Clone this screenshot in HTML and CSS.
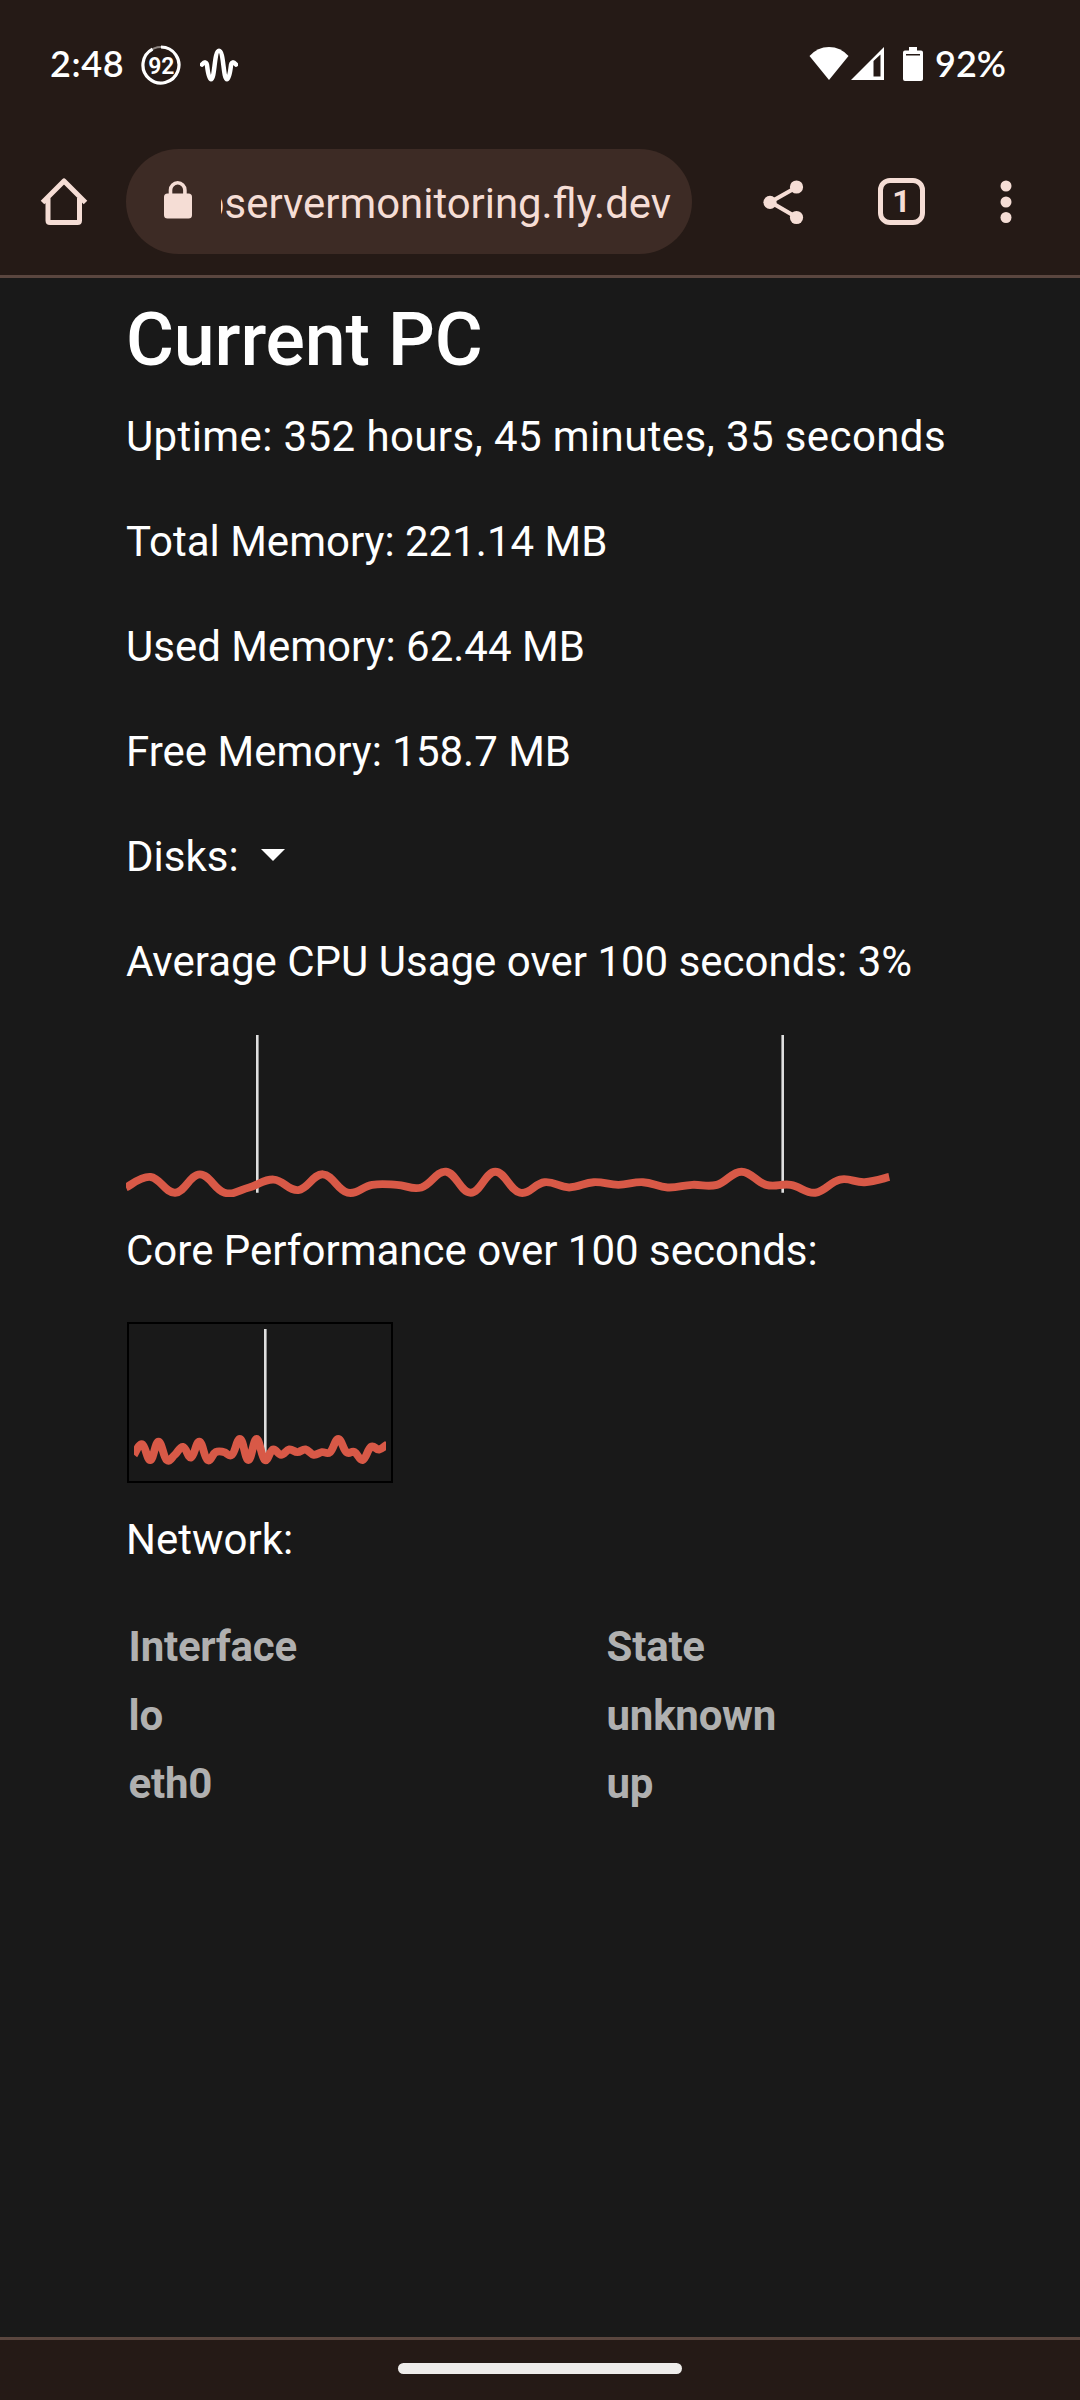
FILE: index.html
```
<!DOCTYPE html>
<html lang="en">
<head>
<meta charset="utf-8">
<title>Server Monitoring</title>
<link rel="stylesheet" href="styles.css">
</head>
<body>
<header class="browser">
  <div class="status">
    <span class="clock">2:48</span>
    <svg class="badge" width="40" height="40" viewBox="0 0 40 40"><circle cx="20" cy="20" r="18" class="ring-track"/><path d="M20 2A18 18 0 1 1 11.5 4.1" class="ring"/><text x="20.3" y="28.5" class="ring-text">92</text></svg>
    <svg class="wave" width="38" height="34" viewBox="0 0 38 34"><path d="M2 16.5Q6 12 7 17Q8.5 31.2 11 31.2C15 31.2 14 2.8 19 2.8S23 31.2 27 31.2Q29.5 31.2 31 17Q32 12 36 16.5"/></svg>
    <span class="spacer"></span>
    <svg class="wifi" width="40" height="33" viewBox="0 0 40 33"><path d="M.5 9Q8.500 0 20 0T39.500 9L20 33Z"/></svg>
    <svg class="signal" width="33" height="33" viewBox="0 0 33 33"><path fill-rule="evenodd" d="M0 33L33 0V33ZM22.500 14V29.500H29.500V7.500Z"/></svg>
    <svg class="battery" width="20" height="34" viewBox="0 0 20 34"><path fill-rule="evenodd" d="M6 0H14V3.500H18Q20 3.500 20 5.500V32Q20 34 18 34H2Q0 34 0 32V5.500Q0 3.500 2 3.500H6ZM3 7V8.500H17V7Z"/></svg>
    <span class="percent">92%</span>
  </div>
  <div class="toolbar">
    <svg class="home" width="48" height="48" viewBox="0 0 48 48"><path d="M2.500 24.500L24 3L45.500 24.500M8 20V42.500Q8 44.500 10 44.500H37.500Q39.500 44.500 39.500 42.500V20"/></svg>
    <div class="address">
      <svg class="lock" width="30" height="38" viewBox="0 0 30 38"><path d="M7.500 14V9a7.200 7.200 0 0 1 14.400 0V14" class="shackle"/><rect x="1" y="12.500" width="28" height="25" rx="3.500"/></svg>
      <div class="url"><span>pservermonitoring.fly.dev</span></div>
    </div>
    <svg class="share" width="42" height="46" viewBox="0 0 42 46"><path d="M34 8L7.500 23L34 38.500"/><circle cx="33.500" cy="8" r="6.600"/><circle cx="7" cy="23.300" r="6.600"/><circle cx="33.500" cy="38.500" r="6.600"/></svg>
    <div class="tabs">1</div>
    <svg class="more" width="12" height="44" viewBox="0 0 12 44"><circle cx="6" cy="6" r="5.500"/><circle cx="6" cy="22" r="5.500"/><circle cx="6" cy="37.500" r="5.500"/></svg>
  </div>
</header>
<main class="page">
  <h1>Current PC</h1>
  <p class="uptime">Uptime: 352 hours, 45 minutes, 35 seconds</p>
  <p>Total Memory: 221.14 MB</p>
  <p>Used Memory: 62.44 MB</p>
  <p>Free Memory: 158.7 MB</p>
  <p class="disks">Disks: <svg width="24" height="12" viewBox="0 0 24 12"><path d="M0 0H24L12 12Z"/></svg></p>
  <p>Average CPU Usage over 100 seconds: 3%</p>
  <svg class="chart cpu" width="788" height="162" viewBox="0 0 788 162"><path class="grid" d="M131.300 0V157.700M656.700 0V157.700"/><path class="line"/></svg>
  <p>Core Performance over 100 seconds:</p>
  <div class="core"><svg class="chart" width="252" height="147" viewBox="0 0 252 147"><path class="grid" d="M131.300 0V131"/><path class="line"/></svg></div>
  <p>Network:</p>
  <div class="table">
    <span>Interface</span><span>State</span>
    <span>lo</span><span>unknown</span>
    <span>eth0</span><span>up</span>
  </div>
</main>
<footer class="navbar"><div class="handle"></div></footer>
<script src="charts.js"></script>
</body>
</html>
```
FILE: styles.css
```
* { box-sizing: border-box; }
body {
  margin: 0;
  width: 1080px;
  height: 2400px;
  display: flex;
  flex-direction: column;
  background: #191919;
  color: #fff;
  font-family: Roboto, sans-serif;
  overflow: hidden;
}
svg { display: block; flex: none; }
.browser { height: 278px; flex: none; background: #251a16; border-bottom: 3px solid #5a463f; }
.status { height: 128px; padding: 0 75px 0 50px; display: flex; align-items: center; font-family: Lato, sans-serif; font-weight: 600; font-size: 36px; }
.clock { letter-spacing: .6px; width: 91px; margin-top: -2px; }
.badge { fill: none; margin-top: 1px; }
.ring { stroke: #fff; stroke-width: 3.2; }
.ring-track { stroke: #8d8581; stroke-width: 2; }
.ring-text { fill: #fff; font: 600 23px Roboto, sans-serif; text-anchor: middle; }
.wave { margin-left: 19px; margin-top: 2px; fill: none; stroke: #fff; stroke-width: 4.5; stroke-linecap: round; }
.spacer { flex: 1; }
.wifi, .signal, .battery { fill: #fff; margin-top: -1px; }
.signal { margin-left: 2px; }
.battery { margin-left: 19px; }
.percent { width: 70px; margin-left: 12px; margin-top: -2px; }
.toolbar { height: 147px; display: flex; align-items: center; padding-left: 40px; fill: #f5ddd5; }
.home { fill: none; stroke: #f5ddd5; stroke-width: 5; stroke-linejoin: round; }
.address { width: 566px; height: 105px; margin-left: 38px; border-radius: 53px; background: #3d2b25; display: flex; align-items: center; padding-left: 37px; }
.lock { margin-top: -3px; }
.shackle { fill: none; stroke: #f5ddd5; stroke-width: 3.6; }
.url { width: 450px; margin-left: 28px; padding-top: 3px; display: flex; justify-content: flex-end; overflow: hidden; color: #f5ddd5; font-size: 41.9px; white-space: nowrap; }
.share { margin-left: 71px; fill: #f5ddd5; }
.share path { fill: none; stroke: #f5ddd5; stroke-width: 4.2; }
.tabs { width: 47px; height: 47px; margin-left: 73px; border: 5px solid #f5ddd5; border-radius: 12px; color: #f5ddd5; font-weight: 700; font-size: 32px; line-height: 37px; text-align: center; }
.more { margin-left: 75px; }
.page { flex: 1; padding: 18px 126px 0; }
h1 { margin: 0; font-weight: 500; font-size: 73.5px; line-height: 88px; letter-spacing: -.15px; }
p { margin: 0; font-size: 42px; line-height: 105px; white-space: nowrap; }
.uptime { letter-spacing: .39px; }
.disks { display: flex; align-items: center; gap: 22px; }
.disks svg { fill: #fff; margin-top: -4px; }
.chart { fill: none; }
.cpu { margin: 21px 0 1px; }
.grid { stroke: #dedede; stroke-width: 2.6; }
.line { stroke: #d85947; stroke-width: 7.900; }
.core { width: 266px; height: 161px; margin: 19px 0 4px 1px; border: 2px solid #000; padding: 5px; }
.table { display: grid; grid-template-columns: 478px 300px; grid-auto-rows: 68.5px; margin: 21px 0 0 2.600px; color: #b0b0b0; font-size: 42px; font-weight: 700; line-height: 68.5px; letter-spacing: -.25px; }
.navbar { height: 63px; flex: none; background: #251a16; border-top: 3px solid #5a463f; padding-top: 23px; }
.handle { width: 284px; height: 11px; margin: 0 auto; border-radius: 6px; background: #eeecea; }
```
FILE: charts.js
```
// CPU load history, in percent above the idle baseline
const load = [2, 6, 0, 7, 0, 2, 5, 1, 7, 0, 3, 3, 2, 8, 0, 8, 0, 4, 2, 4, 3, 4, 2, 3, 3, 8, 3, 3, 0, 5, 4, 6];

function curve(step, base) {
  const pts = load.map((v, i) => [i * step, base - v * 2.625]);
  let d = `M${pts[0]}`;
  for (let i = 1; i < pts.length; i++) {
    const a = pts[i - 2] || pts[i - 1], b = pts[i - 1], c = pts[i], e = pts[i + 1] || c;
    d += `C${b[0] + (c[0] - a[0]) * 0.2} ${b[1] + (c[1] - a[1]) * 0.2} ${c[0] - (e[0] - b[0]) * 0.2} ${c[1] - (e[1] - b[1]) * 0.2} ${c}`;
  }
  return d;
}

const [cpu, core] = document.querySelectorAll('.line');
cpu.setAttribute('d', curve(24.62, 157.7));
core.setAttribute('d', curve(8.17, 131));
```
